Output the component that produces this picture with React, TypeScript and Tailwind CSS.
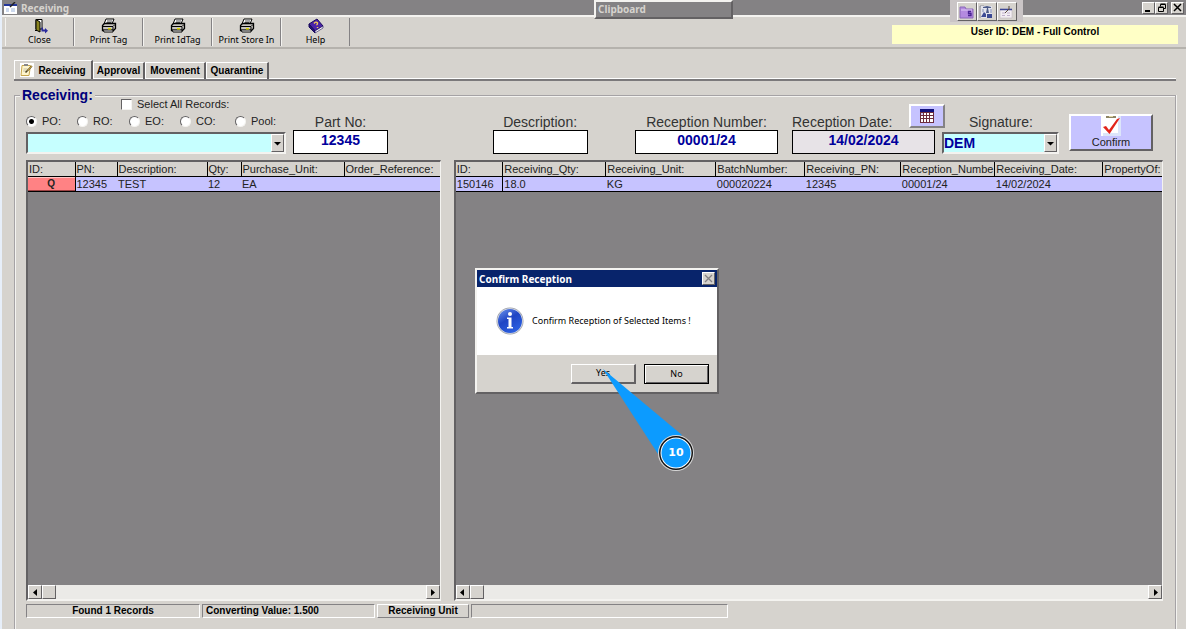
import React from "react";

const raised =
  "border border-t-white border-l-white border-r-[#636163] border-b-[#636163] bg-[#d6d3ce]";
const sunken =
  "border border-t-[#848284] border-l-[#848284] border-r-white border-b-white";

const PrinterIcon = () => (
  <svg width="16" height="16" viewBox="0 0 16 16" aria-hidden="true">
    <path d="M5 1h8l-2 5H3z" fill="#fff" stroke="#000" />
    <path d="M6 3h5M5.500 4.500h5" stroke="#000" strokeWidth="0.700" />
    <path d="M1.500 7.500l2-2h11v5l-2 2h-11z" fill="#c8c5c0" stroke="#000" strokeWidth="1.300" />
    <path d="M2 8.500h10l2-2M12 9v3" stroke="#000" fill="none" />
    <path d="M2 12h10v2H3z" fill="#fff" stroke="#000" />
    <path d="M7 10h3v1.500H7z" fill="#e0d800" />
  </svg>
);

const DoorIcon = () => (
  <svg width="16" height="16" viewBox="0 0 16 16" aria-hidden="true">
    <path d="M4 1.500h6V11H4z" fill="#fff" stroke="#000" />
    <path d="M4 1.500l4 2.500v10L4 12z" fill="#8a8420" stroke="#000" />
    <path d="M3 12.500h2" stroke="#000" />
    <path d="M9.500 9.500h1.500v2h2V10l3 2.800-3 2.700v-2H9.500z" fill="#2a2a9c" />
  </svg>
);

const BookIcon = () => (
  <svg width="16" height="16" viewBox="0 0 16 16" aria-hidden="true">
    <path d="M1 6l8-5 6 7-8 5z" fill="#4a22a8" stroke="#1a0a5c" />
    <path d="M1 6v3l6 6v-2z" fill="#22107c" stroke="#1a0a5c" />
    <path d="M7 13l8-5v2l-8 5z" fill="#fff" stroke="#1a0a5c" strokeWidth="0.600" />
    <path d="M6 5.500q2-2.500 3.500-.5 0 1.500-1 2M9.500 9v1" fill="none" stroke="#f5cc55" strokeWidth="1.400" />
  </svg>
);

const FormIcon = () => (
  <svg width="13" height="12" viewBox="0 0 13 12" aria-hidden="true">
    <path d="M0 2h13v10H0z" fill="#fff" />
    <path d="M0 2h13v2H0z" fill="#22369a" />
    <path d="M2 7h3M7 7h4M2 9h3M7 9h4" stroke="#9bb4dc" />
    <path d="M6 5l5-5" stroke="#222" strokeWidth="1.400" />
  </svg>
);

const NoteIcon = () => (
  <svg width="14" height="14" viewBox="0 0 14 14" aria-hidden="true">
    <path d="M0 0h14v14H0z" fill="#fff" />
    <path d="M2 2.500h8.500L9 12.500H1z" fill="#fff6cc" stroke="#c7a64c" />
    <path d="M4 1h4v2H4z" fill="#888" />
    <path d="M3.500 6h4M3 8h3" stroke="#c4bfa8" />
    <path d="M5.500 9.500L12 3" stroke="#4d4426" strokeWidth="1.600" />
    <path d="M7.500 7.500L12 3" stroke="#e5b23c" strokeWidth="0.800" />
  </svg>
);

const CalendarIcon = () => (
  <svg width="14" height="14" viewBox="0 0 14 14" aria-hidden="true">
    <path d="M0 0h14v14H0z" fill="#6c2c3c" />
    <path d="M0 0h14v3H0z" fill="#10107c" />
    <path
      d="M1 4h2v2H1zM4 4h2v2H4zM7 4h2v2H7zM10 4h3v2h-3zM1 7h2v2H1zM4 7h2v2H4zM7 7h2v2H7zM10 7h3v2h-3zM1 10h2v3H1zM4 10h2v3H4zM7 10h2v3H7zM10 10h3v3h-3z"
      fill="#fff"
    />
    <path d="M1 4h2v2H1z" fill="#c8c5f5" />
  </svg>
);

const CheckIcon = () => (
  <svg width="20" height="20" viewBox="0 0 20 20" aria-hidden="true">
    <path d="M0 0h20v20H0z" fill="#fff" />
    <path d="M17 0h3v20H2v-3h15z" fill="#dce5fa" />
    <path d="M5 0h10v2H5z" fill="#8d8566" />
    <path d="M8 0h4v1H8z" fill="#e3d9a8" />
    <path d="M2 11l3-1 3 4 8-11 3-1L8.500 18z" fill="#e2231a" />
  </svg>
);

const InfoIcon = () => (
  <svg width="28" height="28" viewBox="0 0 28 28" aria-hidden="true">
    <defs>
      <linearGradient id="ball" x1="0" y1="0" x2="0.600" y2="1">
        <stop offset="0" stopColor="#6f97ee" />
        <stop offset="0.500" stopColor="#1f45c4" />
        <stop offset="1" stopColor="#2b5fe0" />
      </linearGradient>
    </defs>
    <circle cx="14" cy="14" r="13.500" fill="#9c9fa8" />
    <circle cx="14" cy="14" r="12.800" fill="#d5dae6" />
    <circle cx="14" cy="14" r="12" fill="url(#ball)" />
    <circle cx="14" cy="7" r="2" fill="#fff" />
    <path d="M11 10.500h4.500v9.500H17v1.500h-6V20h1.500v-8H11z" fill="#fff" />
  </svg>
);

const FolderIcon = () => (
  <svg width="15" height="14" viewBox="0 0 15 14" aria-hidden="true">
    <path d="M1 2h5l1 2h7v9H1z" fill="#b48ae0" stroke="#8a68b8" />
    <path d="M2 5h11" stroke="#e0ccf5" />
    <path d="M12 6.500H9.500v2H12v2H9" fill="none" stroke="#4a2494" strokeWidth="1.300" />
  </svg>
);

const MachineIcon = () => (
  <svg width="15" height="14" viewBox="0 0 15 14" aria-hidden="true">
    <path d="M1 1h4M1 1v12" stroke="#8e8e9a" />
    <path d="M2 1h11v12H2z" fill="#e3e3ec" />
    <path d="M4 2l4-1 4 1v1H9l1 5H7l1-5H4z" fill="#4c5a88" />
    <path d="M2 12l3-5 2 2v3zM8 9h5v4H8z" fill="#3c4a94" />
    <path d="M4 4v3M12 4v4" stroke="#8490b8" />
  </svg>
);

const SheetIcon = () => (
  <svg width="15" height="14" viewBox="0 0 15 14" aria-hidden="true">
    <path d="M1 4h12v9H1z" fill="#f3eef3" stroke="#c0b5c0" strokeWidth="0.600" />
    <path d="M1 4.500h12" stroke="#3c4694" strokeWidth="1.500" />
    <path d="M3 8h3M8 8h3M3 10.500h3M8 10.500h3" stroke="#c0b0cc" />
    <path d="M6 8l4-4V1" fill="none" stroke="#57483c" />
  </svg>
);

const tools = [
  { label: "Close", icon: <DoorIcon /> },
  { label: "Print Tag", icon: <PrinterIcon /> },
  { label: "Print IdTag", icon: <PrinterIcon /> },
  { label: "Print Store In", icon: <PrinterIcon /> },
  { label: "Help", icon: <BookIcon /> },
];

const orderTypes = [
  { label: "PO:", width: "w-[51px]" },
  { label: "RO:", width: "w-[52px]" },
  { label: "EO:", width: "w-[51px]" },
  { label: "CO:", width: "w-[55px]" },
  { label: "Pool:", width: "w-[50px]" },
];

interface Column {
  title: string;
  value: string;
  width: string;
}

const orderColumns: Column[] = [
  { title: "ID:", value: "Q", width: "w-[47px]" },
  { title: "PN:", value: "12345", width: "w-[42px]" },
  { title: "Description:", value: "TEST", width: "w-[90px]" },
  { title: "Qty:", value: "12", width: "w-[34px]" },
  { title: "Purchase_Unit:", value: "EA", width: "w-[103px]" },
  { title: "Order_Reference:", value: "", width: "w-auto" },
];

const receptionColumns: Column[] = [
  { title: "ID:", value: "150146", width: "w-[47px]" },
  { title: "Receiving_Qty:", value: "18.0", width: "w-[103px]" },
  { title: "Receiving_Unit:", value: "KG", width: "w-[110px]" },
  { title: "BatchNumber:", value: "000020224", width: "w-[89px]" },
  { title: "Receiving_PN:", value: "12345", width: "w-[96px]" },
  { title: "Reception_Numbe", value: "00001/24", width: "w-[94px]" },
  { title: "Receiving_Date:", value: "14/02/2024", width: "w-[108px]" },
  { title: "PropertyOf:", value: "", width: "w-auto" },
];

const Arrow = ({ d }: { d: string }) => (
  <svg width="7" height="7" viewBox="0 0 7 7" aria-hidden="true">
    <path d={d} fill="#000" />
  </svg>
);

const ScrollBar = () => (
  <div className="flex h-[14px] bg-[#ebeae7]">
    <button aria-label="Scroll left" className={`flex w-[14px] items-center justify-center ${raised}`}>
      <Arrow d="M5 0v7L1 3.500z" />
    </button>
    <div className={`w-[14px] ${raised}`} />
    <button aria-label="Scroll right" className={`ml-auto flex w-[14px] items-center justify-center ${raised}`}>
      <Arrow d="M2 0v7l4-3.500z" />
    </button>
  </div>
);

const DataPane = ({ columns, grow }: { columns: Column[]; grow: string }) => (
  <div
    className={`flex min-w-0 flex-col border-2 border-t-[#636163] border-r border-r-[#f4f3f0] border-b-[#f4f3f0] border-l-[#636163] bg-[#848284] ${grow}`}
  >
    <table className="w-full table-fixed border-collapse text-left text-[11px] leading-[14px] text-[#222]">
      <thead>
        <tr>
          {columns.map((col) => (
            <th
              key={col.title}
              className={`border-r border-b border-black bg-[#d6d3ce] pl-px font-normal whitespace-nowrap last:border-r-0 ${col.width}`}
            >
              {col.title}
            </th>
          ))}
        </tr>
      </thead>
      <tbody>
        <tr className="border-b border-black bg-[#c6c3ff]">
          {columns.map((col, index) => (
            <td
              key={col.title}
              className={
                col.value === "Q"
                  ? "border-r border-black bg-[#ff8284] text-center text-[10px] font-bold shadow-[inset_0_1px_0_#ffc6c6,inset_0_-1px_0_#9c4142]"
                  : index === 0
                    ? "border-r border-black pl-px"
                    : "pl-px"
              }
            >
              {col.value}
            </td>
          ))}
        </tr>
      </tbody>
    </table>
    <div className="flex-1" />
    <ScrollBar />
  </div>
);

interface FieldProps {
  id: string;
  label: string;
  value: string;
  width: string;
}

const Field: React.FC<FieldProps> = ({ id, label, value, width }) => (
  <div className={`flex flex-col ${width}`}>
    <label htmlFor={id} className="self-center text-[14px] leading-4 whitespace-nowrap text-[#333]">
      {label}
    </label>
    <input
      id={id}
      defaultValue={value}
      className="h-6 w-full border border-black bg-white pb-1 text-center text-[14px] font-bold text-[#00009c]"
    />
  </div>
);

const Combo = ({ id, label, value, width }: { id: string; label: string; value: string; width: string }) => (
  <div
    className={`flex h-[22px] border-2 border-t-[#636163] border-l-[#636163] border-r-[#f4f3f0] border-b-[#f4f3f0] bg-[#c6ffff] ${width}`}
  >
    <select
      id={id}
      aria-label={label}
      defaultValue={value}
      className="min-w-0 flex-1 appearance-none bg-transparent text-[14px] leading-[18px] font-bold text-[#00009c]"
    >
      <option>{value}</option>
    </select>
    <span className={`flex w-[13px] items-center justify-center ${raised}`}>
      <Arrow d="M0 2h7L3.500 5.500z" />
    </span>
  </div>
);

const TitleBar = () => (
  <div className="flex h-[15px] items-center bg-[#848284] pl-[2px]">
    <FormIcon />
    <h1 className="ml-1 font-['Noto_Sans',sans-serif] text-[10px] leading-[14px] font-bold text-[#d6d3ce]">
      Receiving
    </h1>
    <div className="mr-[2px] ml-auto flex">
      <button aria-label="Minimize" className={`flex h-3 w-[13px] items-end justify-center ${raised}`}>
        <svg width="9" height="9" viewBox="0 0 9 9" aria-hidden="true">
          <path d="M1 6h5v2H1z" />
        </svg>
      </button>
      <button aria-label="Restore" className={`flex h-3 w-[13px] items-center justify-center ${raised}`}>
        <svg width="9" height="9" viewBox="0 0 9 9" aria-hidden="true">
          <path d="M3.500 3.500v-2h5v4H6.500M1.500 4.500h5v4h-5zM1.500 4h5M3.500 1h5" fill="none" stroke="#000" />
        </svg>
      </button>
      <button aria-label="Close window" className={`ml-[3px] flex h-3 w-[13px] items-center justify-center ${raised}`}>
        <svg width="9" height="9" viewBox="0 0 9 9" aria-hidden="true">
          <path d="M1 1l7 7M8 1L1 8" stroke="#000" strokeWidth="1.500" />
        </svg>
      </button>
    </div>
  </div>
);

const Toolbar = () => (
  <div className="flex h-[34px] items-start border-t-2 border-b-2 border-t-[#f4f3f0] border-b-[#b5b2ad] pl-[3px]">
    {tools.map((tool) => (
      <button
        key={tool.label}
        className="mt-px flex h-7 w-[69px] flex-col items-center border-r border-l border-r-[#848284] border-l-[#f4f3f0] font-['Noto_Sans',sans-serif] text-[9px] leading-[12px] whitespace-nowrap text-black"
      >
        {tool.icon}
        {tool.label}
      </button>
    ))}
    <div className="mt-2 mr-2 ml-auto h-[19px] w-[286px] bg-[#ffffc6] text-center text-[10px] leading-[13px] font-bold text-black">
      User ID: DEM - Full Control
    </div>
  </div>
);

const tabStyle =
  "h-[17px] border-t border-r-2 border-l border-t-white border-r-[#636163] border-l-white text-[10px] leading-4 font-bold";

const Tabs = () => (
  <div
    role="tablist"
    className="mr-[10px] ml-3 mt-[11px] flex items-end border-b-2 border-[#7b797b] shadow-[inset_0_-1px_0_#fff]"
  >
    <button
      role="tab"
      aria-selected="true"
      className="flex h-[19px] w-[79px] items-center justify-center gap-1 border-t border-r-2 border-l border-t-white border-r-[#636163] border-l-white bg-[#d6d3ce] text-[10px] font-bold"
    >
      <NoteIcon />
      Receiving
    </button>
    <button role="tab" className={`w-[52px] ${tabStyle}`}>
      Approval
    </button>
    <button role="tab" className={`w-[61px] ${tabStyle}`}>
      Movement
    </button>
    <button role="tab" className={`w-[63px] ${tabStyle}`}>
      Quarantine
    </button>
  </div>
);

const FilterForm = () => (
  <div className="flex items-end pr-[10px]">
    <div className="-mt-[6px] w-[260px]">
      <label className="ml-[95px] flex items-center gap-[5px] text-[11px] leading-[14px] text-[#222]">
        <input
          type="checkbox"
          className="size-[11px] appearance-none border border-t-[#636163] border-r-[#f4f3f0] border-b-[#f4f3f0] border-l-[#636163] bg-white"
        />
        Select All Records:
      </label>
      <div className="mt-[3px] mb-1 flex">
        {orderTypes.map((type, index) => (
          <label
            key={type.label}
            className={`flex items-center gap-[5px] text-[11px] leading-[14px] text-[#222] ${type.width}`}
          >
            <input
              type="radio"
              name="order-type"
              defaultChecked={index === 0}
              className="size-[11px] appearance-none rounded-full border border-t-[#636163] border-r-[#f4f3f0] border-b-[#f4f3f0] border-l-[#636163] bg-white checked:bg-[radial-gradient(#000_0_2px,#fff_3px)]"
            />
            {type.label}
          </label>
        ))}
      </div>
      <Combo id="order" label="Order" value="" width="w-full" />
    </div>
    <div className="w-[7px]" />
    <Field id="part-no" label="Part No:" value="12345" width="w-[95px]" />
    <div className="flex-[106]" />
    <Field id="description" label="Description:" value="" width="w-[95px]" />
    <div className="flex-[48]" />
    <Field id="reception-number" label="Reception Number:" value="00001/24" width="w-[143px]" />
    <div className="w-[14px]" />
    <div className="w-[267px]">
      <div className="flex items-end text-[14px] leading-4 whitespace-nowrap text-[#333]">
        <label htmlFor="reception-date" className="w-[117px]">
          Reception Date:
        </label>
        <button
          aria-label="Pick date"
          className="mb-[2px] flex h-6 w-9 items-center justify-center border-2 border-t-white border-r-[#848284] border-b-[#848284] border-l-white bg-[#c6c3ff]"
        >
          <CalendarIcon />
        </button>
        <label htmlFor="signature" className="ml-6">
          Signature:
        </label>
      </div>
      <div className="flex items-end gap-[7px]">
        <input
          id="reception-date"
          defaultValue="14/02/2024"
          className="h-6 w-[143px] border border-black bg-[#e7e3e7] pb-1 text-center text-[14px] font-bold text-[#00009c]"
        />
        <Combo id="signature" label="Signature" value="DEM" width="w-[117px]" />
      </div>
    </div>
    <button className="mb-[3px] ml-[10px] flex h-[37px] w-[84px] flex-col items-center border-2 border-t-white border-r-[#636163] border-b-[#636163] border-l-white bg-[#c6c3ff] text-[11px] leading-[12px] text-[#222]">
      <CheckIcon />
      Confirm
    </button>
  </div>
);

const StatusBar = () => (
  <div className="mt-[3px] mb-[11px] flex h-[14px] gap-[2px] text-[10px] leading-3 font-bold text-black">
    <div className={`w-[174px] text-center ${sunken}`}>Found 1 Records</div>
    <div className={`w-[173px] pl-[3px] ${sunken}`}>Converting Value: 1.500</div>
    <div className="w-[92px] border border-t-white border-r-[#848284] border-b-[#848284] border-l-white text-center">
      Receiving Unit
    </div>
    <div className={`w-[257px] ${sunken}`} />
  </div>
);

const ConfirmDialog = () => (
  <div
    role="dialog"
    aria-label="Confirm Reception"
    className="absolute top-[268px] left-[473px] w-[244px] border-2 border-t-[#f4f3f0] border-r-[#636163] border-b-[#636163] border-l-[#f4f3f0] bg-[#d6d3ce] font-['Noto_Sans',sans-serif] text-[9px]"
  >
    <div className="flex h-[17px] items-center justify-between bg-[#08246b] px-[2px]">
      <h2 className="text-[10px] leading-4 font-bold text-white">Confirm Reception</h2>
      <button aria-label="Close dialog" className={`flex size-[13px] items-center justify-center ${raised}`}>
        <svg width="9" height="9" viewBox="0 0 9 9" aria-hidden="true">
          <path d="M1 1l7 7M8 1L1 8" stroke="#848284" strokeWidth="1.300" />
        </svg>
      </button>
    </div>
    <div className="flex h-[68px] items-center gap-2 bg-white pl-[19px] whitespace-nowrap text-black">
      <InfoIcon />
      <p>Confirm Reception of Selected Items !</p>
    </div>
    <div className="flex h-[37px] items-center justify-end gap-2 pr-2">
      <button className="h-5 w-[65px] border border-t-white border-r-2 border-r-[#636163] border-b-2 border-b-[#636163] border-l-white">
        Yes
      </button>
      <button className="h-5 w-[65px] border border-black shadow-[inset_1px_1px_0_#fff,inset_-1px_-1px_0_#636163]">
        No
      </button>
    </div>
  </div>
);

const StepMarker = () => (
  <div className="absolute top-[368px] left-[598px] h-[104px] w-[96px]">
    <svg width="96" height="104" viewBox="0 0 96 104" aria-hidden="true">
      <path d="M3 1L82 67 58 86z" fill="#0c9bff" />
      <circle cx="76" cy="85" r="18" fill="#d8d8d8" />
      <circle cx="76" cy="85" r="17" fill="#111" />
      <circle cx="76" cy="85" r="15.500" fill="#fff" />
      <circle cx="76" cy="85" r="14.500" fill="#0c9bff" />
    </svg>
    <span className="absolute top-[77px] left-[66px] w-5 text-center font-['DejaVu_Sans',sans-serif] text-[11px] leading-4 font-bold text-white">
      10
    </span>
  </div>
);

export default function App() {
  return (
    <div className="relative flex min-h-screen flex-col border-l-2 border-[#e7effa] bg-[#d6d3ce] font-['Liberation_Sans',Arial,sans-serif]">
      <TitleBar />
      <Toolbar />
      <Tabs />

      <section className="mt-[14px] mr-[10px] ml-3 flex flex-1 flex-col border border-b-0 border-[#a5a2a5] pr-3 pl-[11px] shadow-[inset_1px_1px_0_#f4f3f0,1px_0_0_#f4f3f0]">
        <h2 className="-mt-[9px] -ml-[6px] self-start bg-[#d6d3ce] px-[2px] text-[14px] leading-4 font-bold text-[#00007b]">
          Receiving:
        </h2>
        <FilterForm />
        <div className="mt-[6px] flex flex-1 gap-[13px]">
          <DataPane columns={orderColumns} grow="flex-[414]" />
          <DataPane columns={receptionColumns} grow="flex-[710]" />
        </div>
        <StatusBar />
      </section>

      {/* Floating windows */}
      <div className="absolute top-0 left-[592px] h-[19px] w-[139px] border-2 border-t-[#f4f3f0] border-r-[#636163] border-b-[#636163] border-l-[#f4f3f0] bg-[#848284] pl-[2px] font-['Noto_Sans',sans-serif] text-[10px] leading-[15px] font-bold text-[#d6d3ce]">
        Clipboard
      </div>
      <div className="absolute top-0 right-[163px] flex h-[22px] w-[73px] items-start justify-center bg-[#cac5c6] pt-[2px]">
        <button aria-label="Folder" className={`flex h-[19px] w-5 items-center justify-center ${raised}`}>
          <FolderIcon />
        </button>
        <button aria-label="Equipment" className={`flex h-[19px] w-5 items-center justify-center ${raised}`}>
          <MachineIcon />
        </button>
        <button aria-label="Work sheet" className={`flex h-[19px] w-5 items-center justify-center ${raised}`}>
          <SheetIcon />
        </button>
      </div>
      <ConfirmDialog />
      <StepMarker />
    </div>
  );
}
